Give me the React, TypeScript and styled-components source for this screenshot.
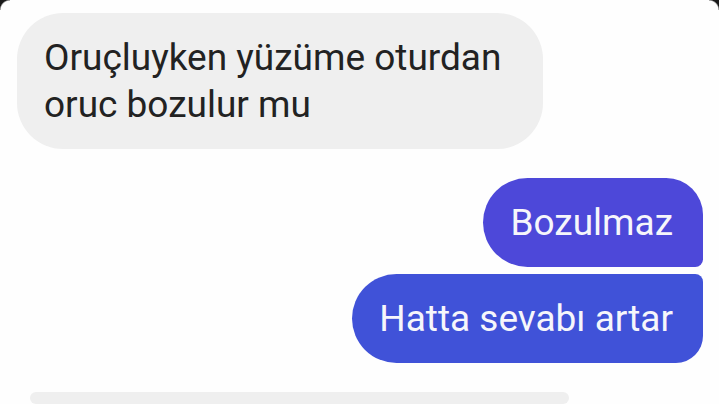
import React from "react";
import styled, { createGlobalStyle } from "styled-components";

const Global = createGlobalStyle`
  html, body { margin: 0; padding: 0; background: #ffffff; }
  body { font-family: Roboto, "Noto Sans", Arial, sans-serif; overflow: hidden; }
`;

const Screen = styled.div`
  position: relative;
  width: 719px;
  height: 404px;
  overflow: hidden;
  background: #fefefe;
  display: flex;
  flex-direction: column;
  padding: 13px 16px 0 17px;
  box-sizing: border-box;
`;

const Incoming = styled.div<{ $width: number }>`
  align-self: flex-start;
  width: ${(p) => p.$width}px;
  box-sizing: border-box;
  background: #efefef;
  border-radius: 46px;
  padding: 21px 20px 21px 27px;
  color: #222222;
  font-size: 37px;
  line-height: 47px;
`;

const Outgroup = styled.div`
  align-self: flex-end;
  display: flex;
  flex-direction: column;
  align-items: flex-end;
  gap: 7px;
  margin-top: 29px;
  margin-bottom: 29px;
`;

const Outgoing = styled.div<{ $pos: "first" | "last"; $bg: string }>`
  height: 89px;
  box-sizing: border-box;
  display: flex;
  align-items: center;
  padding: 0 30px 0 27px;
  background: ${(p) => p.$bg};
  color: #f6f6fb;
  font-size: 37px;
  border-radius: ${(p) =>
    p.$pos === "first" ? "46px 38px 8px 46px" : "46px 8px 28px 46px"};
`;

const NextBubble = styled.div`
  align-self: flex-start;
  margin-left: 13px;
  width: 539px;
  height: 60px;
  background: #efefef;
  border-radius: 44px;
`;

const Corner = styled.div<{ $side: "left" | "right" }>`
  position: absolute;
  top: 0;
  ${(p) => (p.$side === "left" ? "left: 0;" : "right: 0;")}
  width: 10px;
  height: 10px;
  background: ${(p) =>
    p.$side === "left"
      ? "radial-gradient(circle at 100% 100%, transparent 9px, #1a1a1a 10.5px)"
      : "radial-gradient(circle at 0% 100%, transparent 9px, #1a1a1a 10.5px)"};
  pointer-events: none;
`;

export default function App() {
  return (
    <>
      <Global />
      <Screen>
        <Incoming $width={526}>
          Oruçluyken yüzüme oturdan
          <br />
          oruc bozulur mu
        </Incoming>
        <Outgroup>
          <Outgoing $pos="first" $bg="#4d48d9">
            Bozulmaz
          </Outgoing>
          <Outgoing $pos="last" $bg="#4052d8">
            Hatta sevabı artar
          </Outgoing>
        </Outgroup>
        <NextBubble />
        <Corner $side="left" />
        <Corner $side="right" />
      </Screen>
    </>
  );
}
